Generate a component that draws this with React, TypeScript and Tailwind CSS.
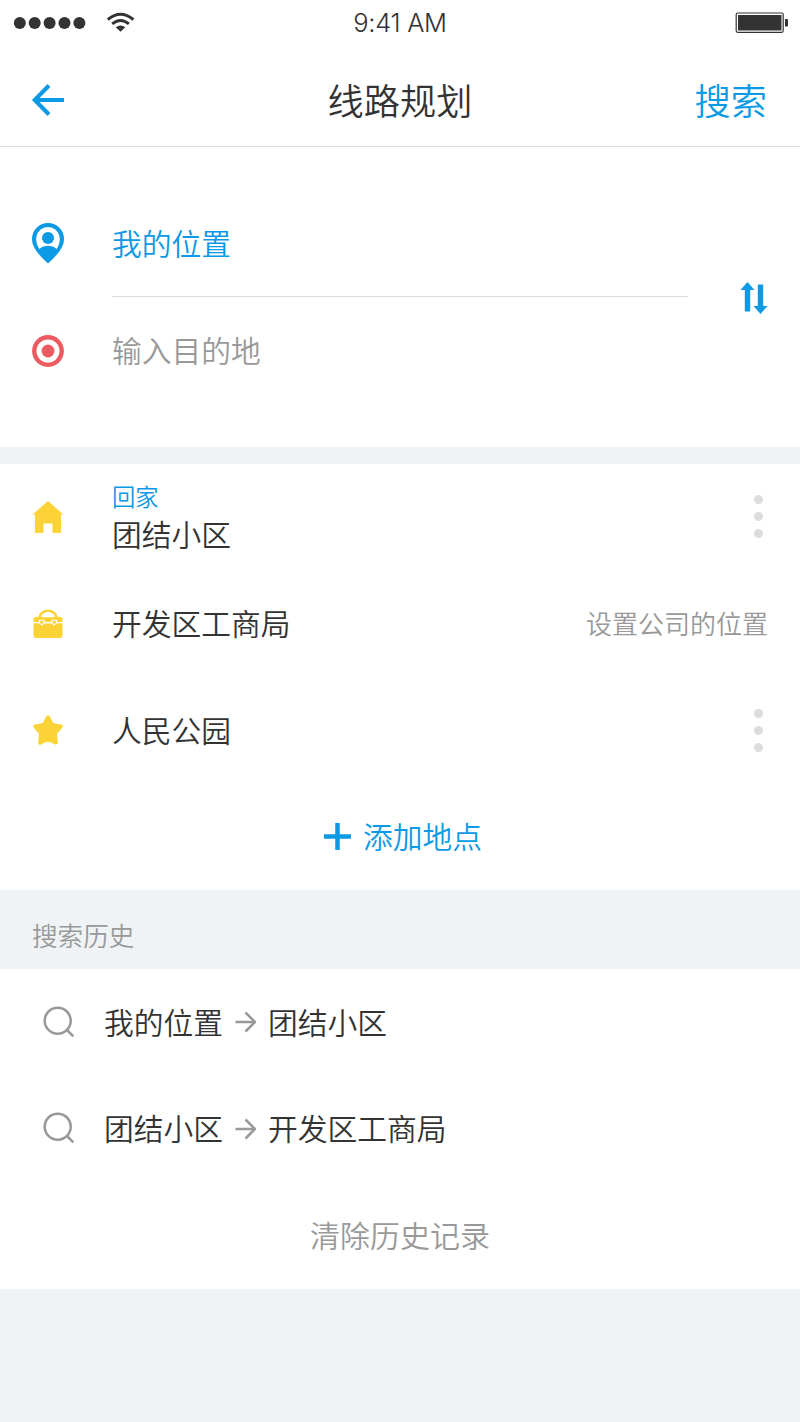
import type { ReactNode } from "react";

function StatusBar() {
  return (
    <div className="grid h-[46px] grid-cols-3 items-center text-[#333]">
      <svg className="ml-[13px]" width="124" height="46" viewBox="13 0 124 46" fill="none">
        <g fill="#333">
          <circle cx="19.8" cy="23" r="6" />
          <circle cx="34.7" cy="23" r="6" />
          <circle cx="49.6" cy="23" r="6" />
          <circle cx="64.5" cy="23" r="6" />
          <circle cx="79.4" cy="23" r="6" />
          <path d="M120.5 31.800 L115.700 27.200 Q120.5 24 125.300 27.200 Z" />
        </g>
        <g stroke="#333" strokeWidth="3">
          <path d="M107.8 19.6 Q120.5 8.8 133.4 19.6" />
          <path d="M112.2 23.9 Q120.5 17 128.9 23.9" />
        </g>
      </svg>
      <span className="pb-px text-center font-['Inter'] text-[25.500px] leading-none font-[350] tracking-[-0.3px]">
        9:41 AM
      </span>
      <svg className="mr-3 justify-self-end" width="53" height="22" viewBox="0 0 53 22" fill="none">
        <rect x="1.2" y="1" width="47" height="19.3" rx="1.5" stroke="#333" strokeWidth="1.2" />
        <rect x="3" y="3" width="43.5" height="15.5" fill="#333" />
        <path d="M50 7H52a1 1 0 0 1 1 1v5.500a1 1 0 0 1-1 1H50Z" fill="#333" />
      </svg>
    </div>
  );
}

function BackIcon() {
  return (
    <svg className="-ml-px" width="34" height="34" viewBox="0 0 34 34" fill="none" stroke="#0c99e5" strokeWidth="4">
      <path d="M33 17H4M18 2.500L3.700 17L18 31.500" />
    </svg>
  );
}

function PinIcon() {
  return (
    <svg width="32" height="41" viewBox="0 0 32 41">
      <path d="M16 0C7 0 0 7 0 16C0 25.500 9 34 16 40.500C23 34 32 25.500 32 16C32 7 25 0 16 0Z" fill="#0c99e5" />
      <path d="M16 4C9.400 4 4.200 9.200 4.200 15.800C4.200 20 5.500 23.500 7.600 26C11.500 21.800 20.500 21.800 24.400 26C26.500 23.500 27.800 20 27.800 15.800C27.800 9.200 22.600 4 16 4Z" fill="#fff" />
      <circle cx="16" cy="15" r="6" fill="#0c99e5" />
    </svg>
  );
}

function TargetIcon() {
  return (
    <svg width="32" height="32" viewBox="0 0 32 32">
      <circle cx="16" cy="16" r="13.700" fill="none" stroke="#ec5b60" strokeWidth="4.400" />
      <circle cx="16" cy="16" r="6.400" fill="#ec5b60" />
    </svg>
  );
}

function SwapIcon() {
  return (
    <svg className="mt-px" width="28" height="32" viewBox="0 0 28 32" fill="#0c99e5">
      <path d="M7.500 0L14.500 8H10.200V29.500H4.800V8H0.500Z" />
      <path d="M17.800 2.500H23.200V24H27.500L20.500 32L13.500 24H17.800Z" />
    </svg>
  );
}

function HomeIcon() {
  return (
    <svg className="mt-px" width="32" height="34" viewBox="0 0 32 34" fill="#fcd337">
      <path d="M16 1L31.500 14.600H29V33H20.500V23.500H11.500V33H3V14.600H0.500Z" />
    </svg>
  );
}

function BriefcaseIcon() {
  return (
    <svg className="mt-0.5" width="30" height="30" viewBox="0 0 30 30" fill="none">
      <path d="M6.500 8.500Q8.200 1.800 15 1.800Q21.800 1.800 23.500 8.500" stroke="#fcd337" strokeWidth="2.500" />
      <path d="M0.500 13V10.500Q0.500 7.800 3.500 7.800H26.500Q29.500 7.800 29.500 10.500V13Z" fill="#fcd337" />
      <path d="M0.500 14.300H29.500V27a2 2 0 0 1-2 2H2.500a2 2 0 0 1-2-2Z" fill="#fcd337" />
      <path d="M6.500 11.300H11V13.800L8.800 16L6.500 13.800ZM19 11.300H23.500V13.800L21.200 16L19 13.800Z" fill="#fcd337" stroke="#fff" strokeWidth="1.100" />
      <path d="M11.500 13.600H18.500" stroke="#fff" strokeWidth="1.300" />
      <path d="M9 8.200Q10 4.500 15 4.500Q20 4.500 21 8.200Z" fill="#fff" />
    </svg>
  );
}

function StarIcon() {
  return (
    <svg width="32" height="32" viewBox="0 0 32 32">
      <path
        d="M16 3.300L20 10.900L28.800 12.500L22.800 19.200L23.900 28.600L16 25L8.100 28.600L9.200 19.200L3.200 12.500L12 10.900Z"
        fill="#fcd337"
        stroke="#fcd337"
        strokeWidth="4"
        strokeLinejoin="round"
      />
    </svg>
  );
}

function SearchIcon() {
  return (
    <svg width="32" height="32" viewBox="0 0 32 32" fill="none" stroke="#999" strokeWidth="2.500">
      <circle cx="14.700" cy="14.700" r="13" />
      <path d="M23.500 23.500L30.300 30.300" />
    </svg>
  );
}

function ArrowIcon() {
  return (
    <svg className="mx-3 mt-px shrink-0" width="21" height="22" viewBox="0 0 21 22" fill="none" stroke="#999" strokeWidth="2.500">
      <path d="M0.500 11H19.500M10.500 1.500L20 11L10.500 20.500" />
    </svg>
  );
}

function MoreDots() {
  return (
    <div className="mr-[5px] flex w-[9px] flex-col gap-2">
      <span className="size-[9px] rounded-full bg-[#dcdcdc]" />
      <span className="size-[9px] rounded-full bg-[#dcdcdc]" />
      <span className="size-[9px] rounded-full bg-[#dcdcdc]" />
    </div>
  );
}

function PlaceRow({ icon, children, action }: { icon: ReactNode; children: ReactNode; action?: ReactNode }) {
  return (
    <div className="flex h-[106.67px] items-center px-8">
      <div className="flex w-20 shrink-0">
        <div className="flex w-8 justify-center">{icon}</div>
      </div>
      <div className="flex-1 pb-0.5">{children}</div>
      {action}
    </div>
  );
}

function HistoryRow({ from, to }: { from: string; to: string }) {
  return (
    <div className="flex h-[106.67px] items-center pl-[43px]">
      <div className="w-[61px] shrink-0">
        <SearchIcon />
      </div>
      <span className="pb-0.5">{from}</span>
      <ArrowIcon />
      <span className="pb-0.5">{to}</span>
    </div>
  );
}

export default function App() {
  return (
    <div className="h-[1422px] w-[800px] overflow-hidden bg-[#eff3f6] font-['Noto_Sans_CJK_SC',sans-serif] text-[29.750px] leading-[44px] font-[350] text-[#333]">
      <header className="h-[147px] border-b border-[#dcdcdc] bg-white">
        <StatusBar />
        <div className="grid h-[108px] grid-cols-3 items-center px-8 text-[36.200px]">
          <BackIcon />
          <h1 className="pb-0.5 text-center">线路规划</h1>
          <span className="pr-px pb-0.5 text-right text-[#0c99e5]">搜索</span>
        </div>
      </header>

      <section className="flex h-[300px] items-center bg-white pl-8">
        <div className="w-20 shrink-0">
          <div className="flex h-[107px] items-center">
            <PinIcon />
          </div>
          <div className="flex h-[107px] items-center">
            <TargetIcon />
          </div>
        </div>
        <div className="w-[576px]">
          <div className="flex h-[107px] items-center border-b border-[#dcdcdc] pb-[3px] text-[#0c99e5]">我的位置</div>
          <div className="flex h-[107px] items-center pb-[3px] text-[#999]">输入目的地</div>
        </div>
        <div className="ml-[52px]">
          <SwapIcon />
        </div>
      </section>

      <section className="mt-[16.500px] h-[426.500px] bg-white">
        <PlaceRow icon={<HomeIcon />} action={<MoreDots />}>
          <div className="pt-[5px] text-[23.300px] leading-[30px] text-[#0c99e5]">回家</div>
          <div>团结小区</div>
        </PlaceRow>
        <PlaceRow icon={<BriefcaseIcon />} action={<span className="text-[26px] text-[#999]">设置公司的位置</span>}>
          开发区工商局
        </PlaceRow>
        <PlaceRow icon={<StarIcon />} action={<MoreDots />}>
          人民公园
        </PlaceRow>
        <div className="flex h-[106.67px] items-center justify-center gap-3 pl-[6px] text-[#0c99e5]">
          <svg width="27" height="27" viewBox="0 0 27 27" stroke="#0c99e5" strokeWidth="4.500">
            <path d="M13.500 0V27M0 13.500H27" />
          </svg>
          <span className="pb-[4px]">添加地点</span>
        </div>
      </section>

      <h2 className="flex h-[78.500px] items-center px-8 pt-[11px] text-[25.600px] text-[#999]">搜索历史</h2>

      <section className="h-[320.500px] bg-white">
        <HistoryRow from="我的位置" to="团结小区" />
        <HistoryRow from="团结小区" to="开发区工商局" />
        <div className="flex h-[106.67px] items-center justify-center pb-[3px] text-[30px] text-[#999]">清除历史记录</div>
      </section>
    </div>
  );
}
